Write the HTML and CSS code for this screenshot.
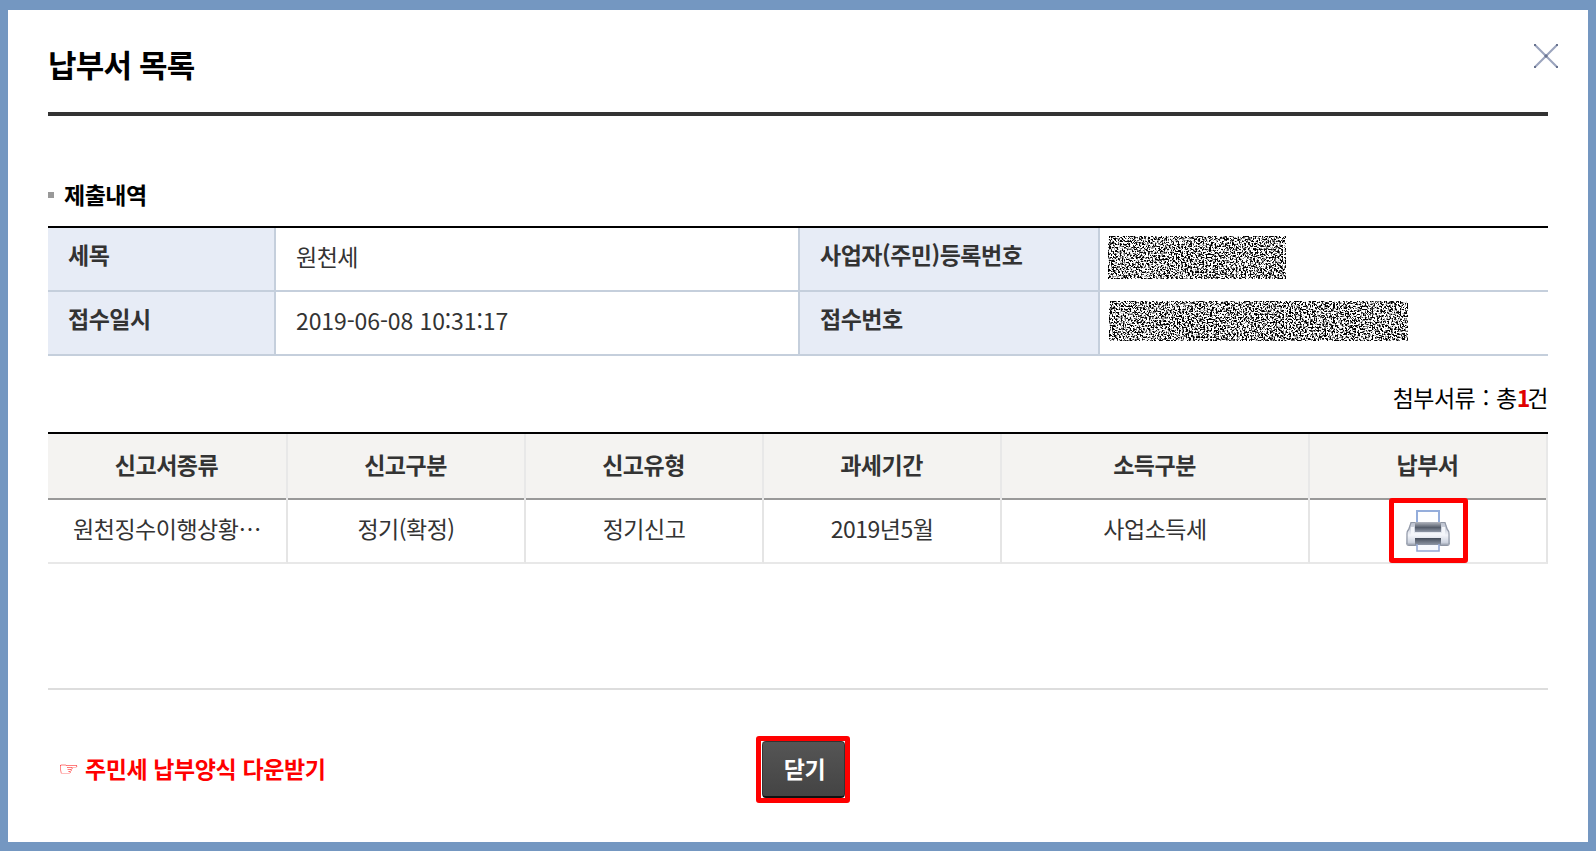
FILE: index.html
```html
<!DOCTYPE html>
<html lang="ko">
<head>
  <meta charset="UTF-8" />
  <title>납부서 목록</title>
  <link rel="stylesheet" href="styles.css">
</head>
<body>
  <div class="popup">
    <header class="popup-head">
      <h1>납부서 목록</h1>
      <button class="btn-x" aria-label="닫기">
        <svg width="24" height="24" viewBox="0 0 24 24">
          <path d="M0.5 0.5L23.5 23.5M23.5 0.5L0.5 23.5" stroke="#9ba4bd" stroke-width="2.1" />
          <path d="M0 0h2v2h-2zM22 0h2v2h-2zM0 22h2v2h-2zM22 22h2v2h-2zM12 10l2 2l-2 2l-2 -2z" fill="#68738f" />
        </svg>
      </button>
    </header>

    <h2 class="sub-title">제출내역</h2>
    <table class="info">
      <colgroup><col class="i1"><col class="i2"><col class="i3"><col></colgroup>
      <tr>
        <th>세목</th>
        <td>원천세</td>
        <th>사업자(주민)등록번호</th>
        <td class="masked">
          <svg class="mask mask-biz" width="178" height="43">
            <filter id="noise" x="0" y="0" width="100%" height="100%" color-interpolation-filters="sRGB">
              <feTurbulence type="fractalNoise" baseFrequency="0.57 0.61" numOctaves="5" seed="23" />
              <feColorMatrix values="4 4 4 0 -5.3  4 4 4 0 -5.3  4 4 4 0 -5.3  0 0 0 0 1" />
            </filter>
            <rect width="100%" height="100%" filter="url(#noise)" />
          </svg>
        </td>
      </tr>
      <tr>
        <th>접수일시</th>
        <td class="date">2019-06-08 10:31:17</td>
        <th>접수번호</th>
        <td class="masked">
          <svg class="mask mask-no" width="299" height="40">
            <rect width="100%" height="100%" filter="url(#noise)" />
          </svg>
        </td>
      </tr>
    </table>

    <p class="total">첨부서류 : 총<b>1</b>건</p>

    <table class="list">
      <colgroup><col class="l1"><col class="l2"><col class="l2"><col class="l2"><col class="l5"><col></colgroup>
      <thead>
        <tr>
          <th>신고서종류</th><th>신고구분</th><th>신고유형</th><th>과세기간</th><th>소득구분</th><th>납부서</th>
        </tr>
      </thead>
      <tbody>
        <tr>
          <td>원천징수이행상황⋯</td>
          <td>정기(확정)</td>
          <td>정기신고</td>
          <td>2019년5월</td>
          <td>사업소득세</td>
          <td class="print-cell">
            <button class="btn-print" aria-label="납부서 출력">
              <svg width="44" height="42" viewBox="0 0 44 42">
                <defs>
                  <linearGradient id="body" x1="0" y1="0" x2="0" y2="1">
                    <stop offset="0" stop-color="#b9bfcb" /><stop offset="0.35" stop-color="#d8dce6" />
                    <stop offset="0.55" stop-color="#f3f5fa" /><stop offset="0.85" stop-color="#cdd3df" />
                    <stop offset="1" stop-color="#848b99" />
                  </linearGradient>
                  <linearGradient id="slot" x1="0" y1="0" x2="0" y2="1">
                    <stop offset="0" stop-color="#b3b7c0" /><stop offset="0.55" stop-color="#555d6b" />
                    <stop offset="1" stop-color="#8e96a6" />
                  </linearGradient>
                  <linearGradient id="tray" x1="0" y1="0" x2="0" y2="1">
                    <stop offset="0" stop-color="#444c5a" /><stop offset="1" stop-color="#9aa2b1" />
                  </linearGradient>
                </defs>
                <path d="M11 14V1H33V14" fill="#fdfeff" stroke="#94addb" stroke-width="2" />
                <path d="M5 12H39L42 19Q44 21 44 25V33Q44 36 41 36H3Q0 36 0 33V25Q0 21 2 19Z" fill="url(#body)" />
                <path d="M1 34V24Q1 21 3 19L5 12.5H9M43 34V24Q43 21 41 19L39 12.5H35" fill="none" stroke="#9299a7" stroke-width="1.2" />
                <path d="M9 12H35V22H9Z" fill="url(#slot)" />
                <path d="M5 17H8V23H36V17H39V25H5Z" fill="#f4f6fa" />
                <path d="M9 28H35V36H9Z" fill="url(#tray)" />
                <path d="M11 35V41H33V35Z" fill="#f6f8fd" />
                <path d="M11 34V41H33V34" fill="none" stroke="#94a8d3" stroke-width="1.6" />
              </svg>
            </button>
          </td>
        </tr>
      </tbody>
    </table>

    <footer class="popup-foot">
      <a class="down-link"><span class="hand">☞</span>주민세 납부양식 다운받기</a>
      <div class="close-box"><button class="btn-close">닫기</button></div>
    </footer>
  </div>
</body>
</html>
```

FILE: styles.css
```css
* { box-sizing: border-box; }
body {
  margin: 0; padding: 10px 8px 9px; height: 851px; overflow: hidden;
  background: #7497c1; color: #333;
  font-family: "Noto Sans CJK KR", "Noto Sans", sans-serif;
  font-size: 23px; letter-spacing: -0.5px;
}
h1, h2, p { margin: 0; }
button { font-family: inherit; padding: 0; border: 0; background: none; cursor: pointer; }
svg { display: block; }

.popup { height: 832px; padding: 0 40px; background: #fff; }
.popup-head {
  display: flex; justify-content: space-between; height: 106px;
  border-bottom: 4px solid #333;
}
.popup-head h1 {
  padding-top: 31px; font-size: 31px; line-height: 46px; color: #000;
  letter-spacing: -0.8px;
}
.btn-x { width: 24px; height: 24px; margin: 34px -10px 0 0; }

/* 제출내역 */
.sub-title {
  display: flex; align-items: center; gap: 10px; height: 40px; margin-top: 58px;
  font-size: 23px; color: #000; margin-bottom: 12px;
}
.sub-title::before { content: ""; width: 6px; height: 6px; margin-top: 2px; background: #999; }

table {
  width: 100%; table-layout: fixed; border-collapse: separate; border-spacing: 0;
}
th, td { padding: 0; line-height: 34px; }
.info { border-top: 2px solid #000; }
.info th, .info td {
  height: 64px; border-bottom: 2px solid #c5cfdc; text-align: left;
  vertical-align: top; padding: 11px 20px 0;
}
.info th { padding-top: 9px; border-right: 2px solid #c5cfdc; background: #e7ecf6; }
.info td:nth-child(2) { border-right: 2px solid #c5cfdc; }
.info td.date { letter-spacing: -0.1px; }
.i1 { width: 228px; }
.i2 { width: 524px; }
.i3 { width: 300px; }
.info td.masked { padding: 8px 0 0 8px; }
.mask-no { margin: 1px 0 0 1px; }

.total {
  height: 76px; padding-top: 24px; line-height: 34px; text-align: right; color: #000;
  word-spacing: 1.5px;
}
.total b { color: #e00000; letter-spacing: -4px; margin-right: 1px; }

/* 첨부서류 목록 */
.list { border-top: 2px solid #000; text-align: center; }
.list th, .list td { vertical-align: top; }
.list th {
  height: 66px; padding: 13px 3px 0 0;
  background:
    linear-gradient(#e8e8e8, #e8e8e8) right / 2px 100% no-repeat,
    linear-gradient(#999, #999) bottom / 100% 2px no-repeat,
    #f4f3f1;
}
.list td {
  height: 64px; padding: 11px 0 0;
  border-right: 2px solid #e5e5e5; border-bottom: 2px solid #e8e8e8;
}
.l1 { width: 240px; }
.l2 { width: 238px; }
.l5 { width: 308px; }
.list td.print-cell { padding: 0; }
.btn-print {
  display: flex; align-items: center; justify-content: center;
  width: 79px; height: 65px; margin: -2px auto; border: 5px solid #f00; border-radius: 3px;
}

.popup-foot {
  display: grid; grid-template-columns: 708px 94px 1fr; margin-top: 124px;
  padding-top: 46px; border-top: 2px solid #ddd;
}
.down-link {
  display: flex; align-items: center; height: 64px; padding-left: 10px;
  color: #f00; font-weight: bold; letter-spacing: -0.4px;
}
/* 가로로 넓은 손 모양 */
.hand {
  width: 27px; font: 19px "DejaVu Sans", sans-serif;
  transform: scale(1.25, 0.95); transform-origin: left center;
}
.close-box { height: 67px; padding-left: 1px; border: 5px solid #f00; border-radius: 3px; }
.btn-close {
  display: block; width: 83px; height: 57px; padding: 0 0 2px 2px; border-radius: 4px;
  background: linear-gradient(#555, #444); border: 1px solid #333;
  border-bottom: 2px solid #111; color: #fff; font-size: 23px; font-weight: bold;
  letter-spacing: -0.5px;
}
```
